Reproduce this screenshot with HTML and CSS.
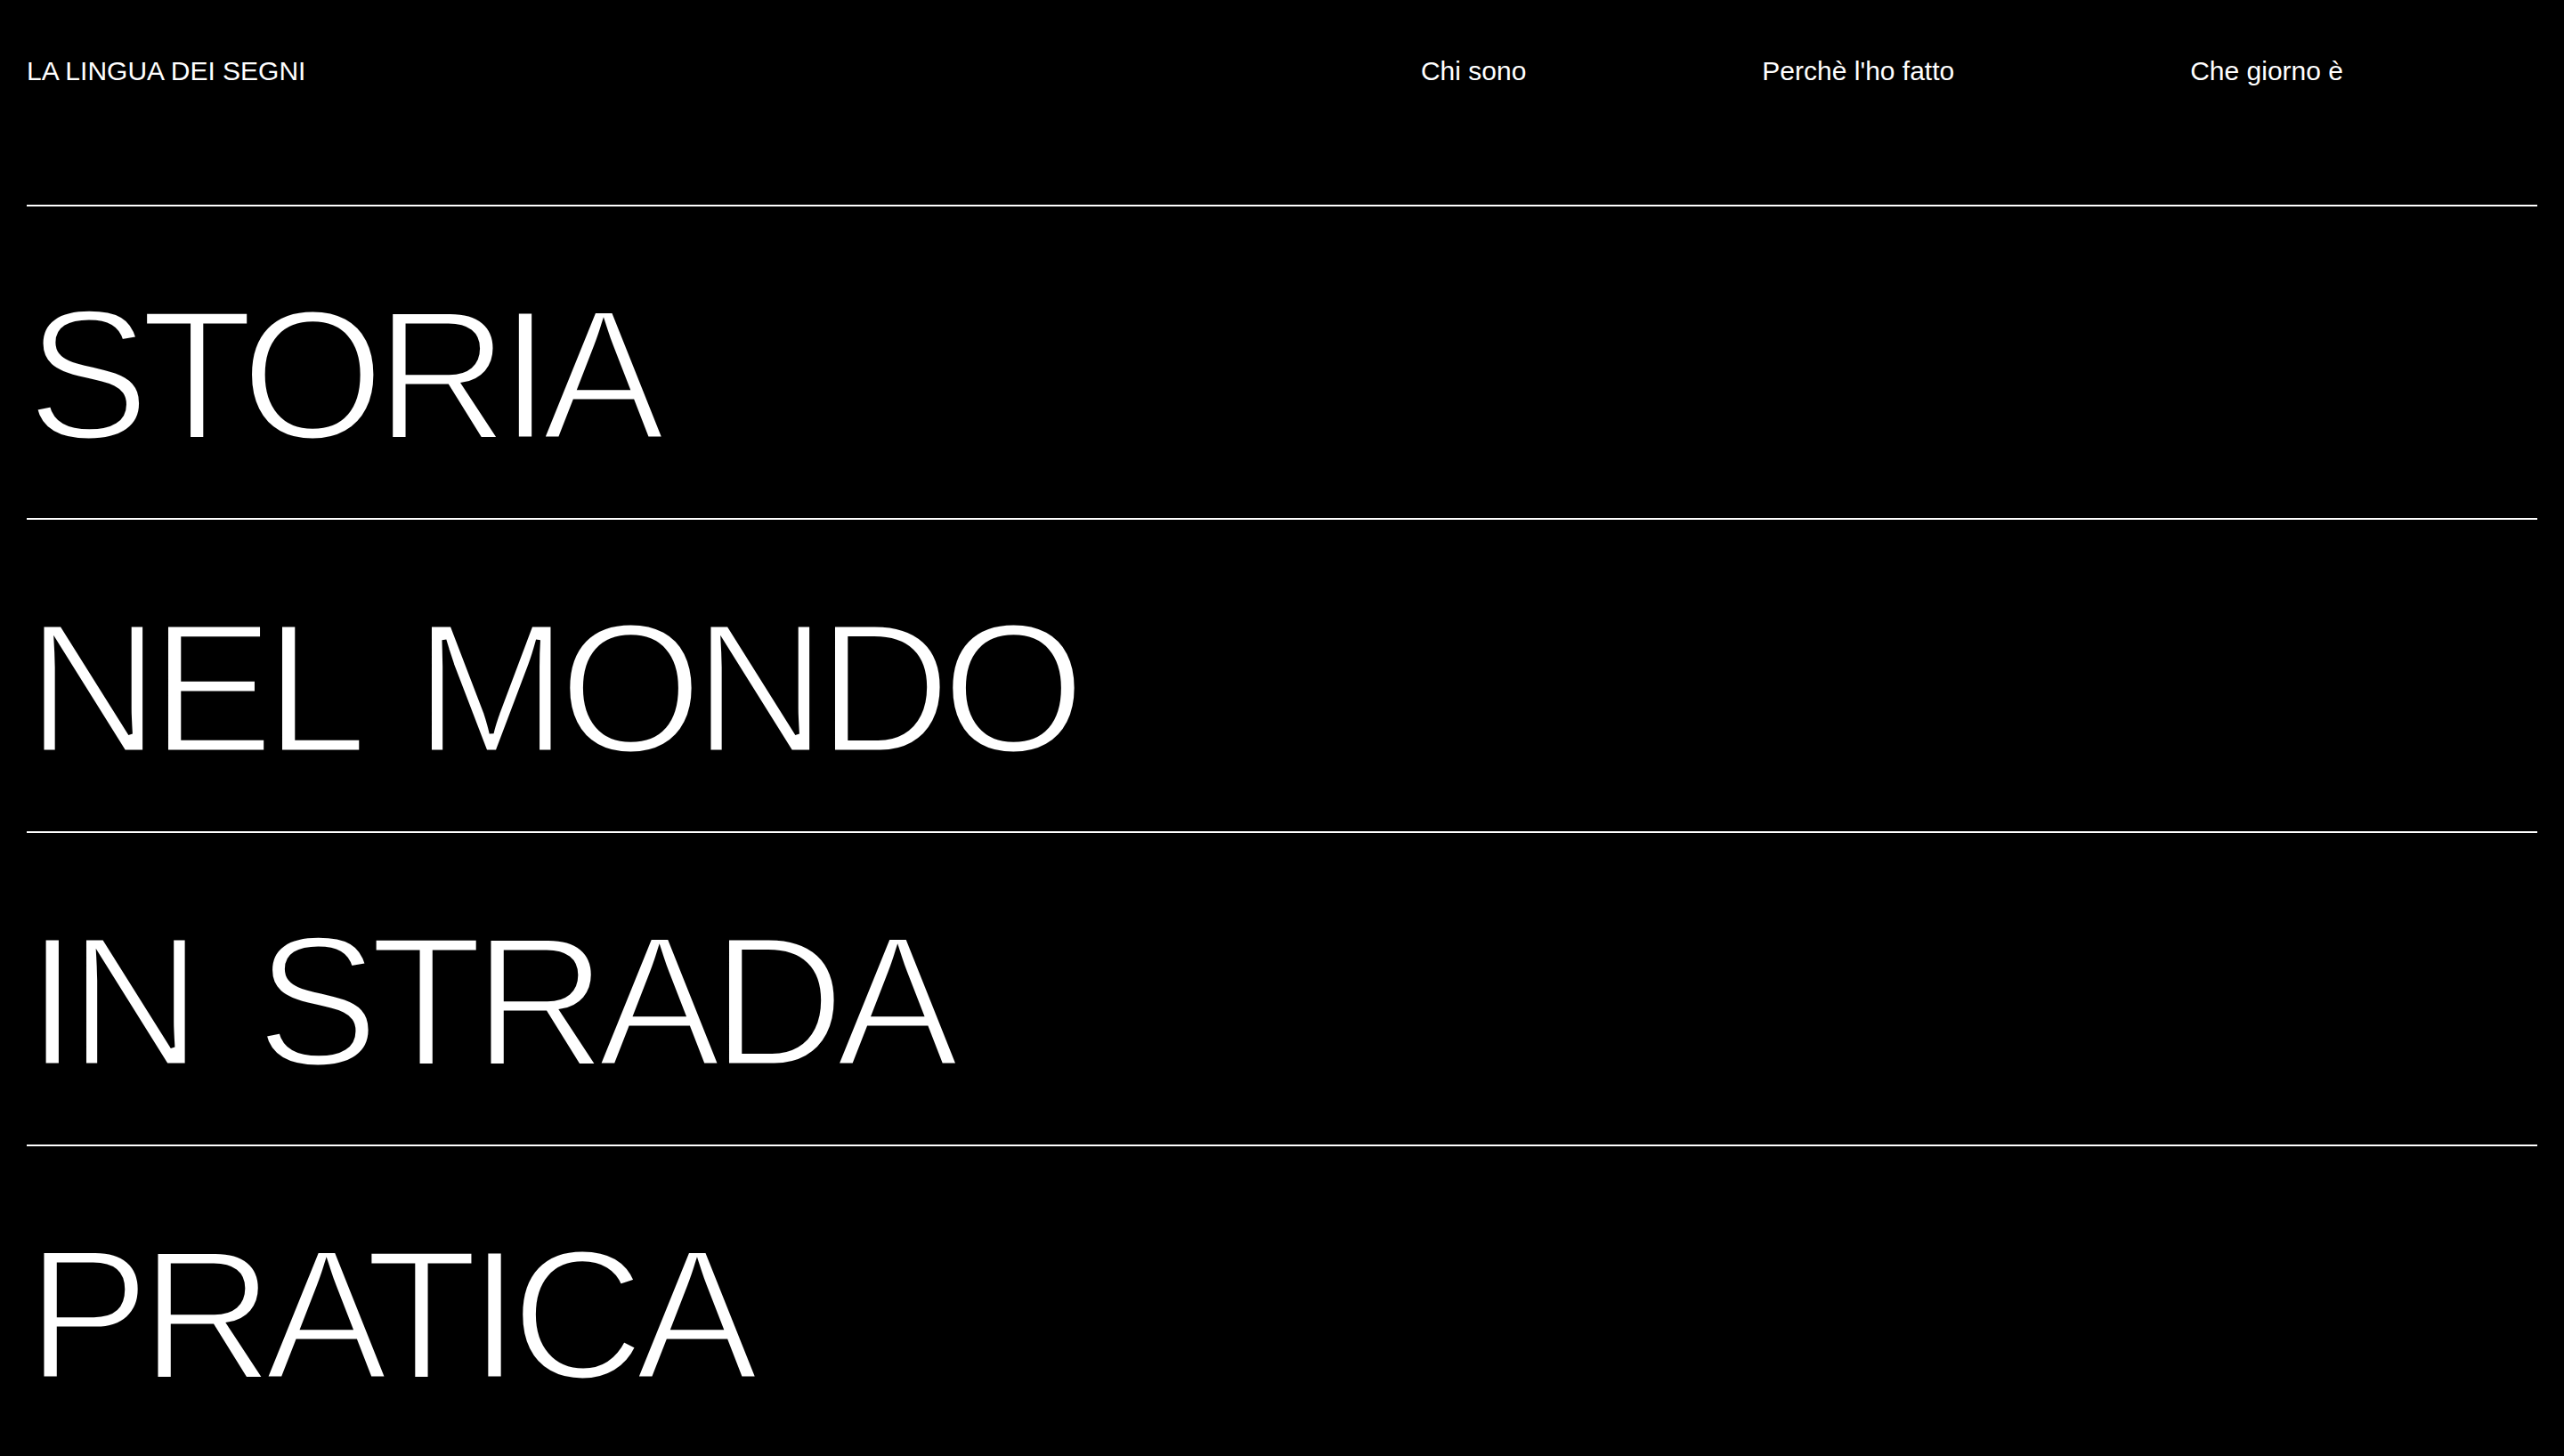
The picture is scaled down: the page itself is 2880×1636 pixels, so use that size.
FILE: index.html
```html
<!DOCTYPE html>
<html lang="it">
<head>
<meta charset="utf-8">
<title>La lingua dei segni</title>
<link rel="stylesheet" href="styles.css">
</head>
<body>
<header class="site-header">
  <div class="brand">LA LINGUA DEI SEGNI</div>
  <nav class="main-nav">
    <a href="#" class="nav-link">Chi sono</a>
    <a href="#" class="nav-link">Perchè l'ho fatto</a>
    <a href="#" class="nav-link">Che giorno è</a>
  </nav>
</header>
<main class="chapters">
  <section class="chapter"><h2 class="chapter-title">STORIA</h2></section>
  <section class="chapter"><h2 class="chapter-title">NEL MONDO</h2></section>
  <section class="chapter"><h2 class="chapter-title">IN STRADA</h2></section>
  <section class="chapter"><h2 class="chapter-title">PRATICA</h2></section>
</main>
</body>
</html>
```

FILE: styles.css
```css
* {
  box-sizing: border-box;
}

html, body {
  margin: 0;
  background: #000;
}

body {
  padding: 0 30px;
  color: #fff;
  font-family: "Liberation Sans", Arial, Helvetica, sans-serif;
  overflow: hidden;
}

.site-header {
  display: flex;
  align-items: flex-start;
  height: 232px;
  padding-top: 63px;
  border-bottom: 2px solid #fff;
  font-size: 30px;
  line-height: normal;
}

.brand {
  white-space: nowrap;
}

.main-nav {
  display: flex;
  gap: 265px;
  margin-left: auto;
  margin-right: 218px;
}

.nav-link {
  color: #fff;
  text-decoration: none;
  white-space: nowrap;
}

.chapter {
  height: 352px;
  border-bottom: 2px solid #fff;
  padding-top: 86px;
}

.chapter-title {
  margin: 0;
  font-size: 207px;
  font-weight: 400;
  line-height: 1;
  letter-spacing: -10px;
  word-spacing: 23px;
  font-kerning: normal;
  white-space: nowrap;
  -webkit-text-stroke: 5px #000;
}
```
